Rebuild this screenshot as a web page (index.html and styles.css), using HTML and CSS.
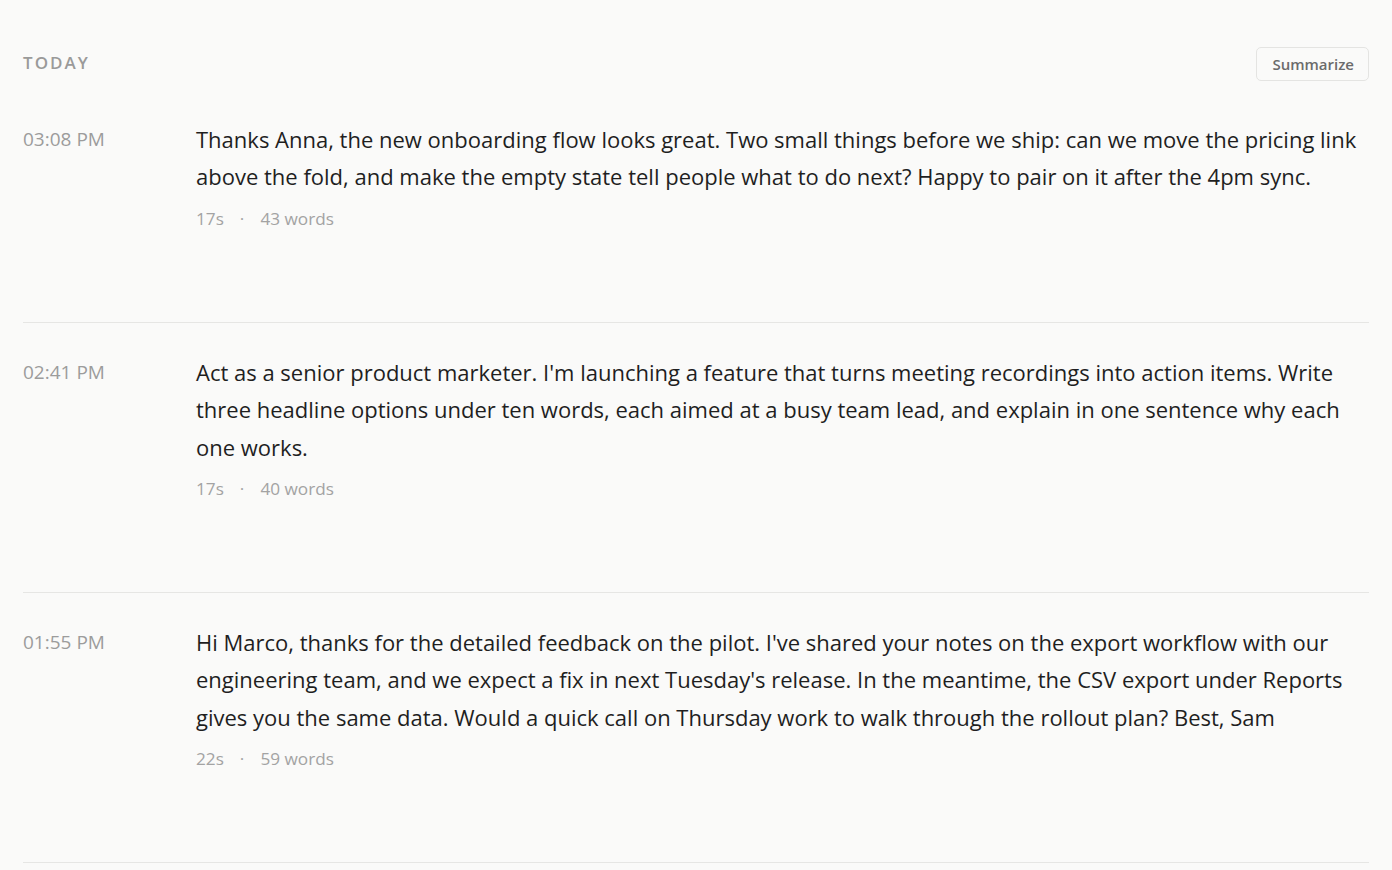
FILE: index.html
```html
<!DOCTYPE html>
<html lang="en">
<head>
<meta charset="utf-8">
<title>Today</title>
<link rel="stylesheet" href="styles.css">
</head>
<body>
<main class="page">
  <header class="day-header">
    <h2 class="day-label">Today</h2>
    <button class="summarize-btn" type="button">Summarize</button>
  </header>

  <article class="entry">
    <time class="entry-time">03:08 PM</time>
    <div class="entry-body">
      <p class="entry-text">Thanks Anna, the new onboarding flow looks great. Two small things before we ship: can we move the pricing link above the fold, and make the empty state tell people what to do next? Happy to pair on it after the 4pm sync.</p>
      <div class="entry-meta"><span>17s</span><span class="dot">·</span><span>43 words</span></div>
    </div>
  </article>

  <article class="entry">
    <time class="entry-time">02:41 PM</time>
    <div class="entry-body">
      <p class="entry-text">Act as a senior product marketer. I'm launching a feature that turns meeting recordings into action items. Write three headline options under ten words, each aimed at a busy team lead, and explain in one sentence why each one works.</p>
      <div class="entry-meta"><span>17s</span><span class="dot">·</span><span>40 words</span></div>
    </div>
  </article>

  <article class="entry">
    <time class="entry-time">01:55 PM</time>
    <div class="entry-body">
      <p class="entry-text">Hi Marco, thanks for the detailed feedback on the pilot. I've shared your notes on the export workflow with our engineering team, and we expect a fix in next Tuesday's release. In the meantime, the CSV export under Reports gives you the same data. Would a quick call on Thursday work to walk through the rollout plan? Best, Sam</p>
      <div class="entry-meta"><span>22s</span><span class="dot">·</span><span>59 words</span></div>
    </div>
  </article>
</main>
</body>
</html>
```
FILE: styles.css
```css
* { box-sizing: border-box; }

html, body {
  margin: 0;
  background: #fafaf9;
}

body {
  font-family: "Open Sans", "Noto Sans", sans-serif;
  color: #1f1f1f;
}

.page {
  padding: 47px 23px 0 23px;
}

.day-header {
  display: flex;
  align-items: center;
  justify-content: space-between;
  height: 34px;
  margin-bottom: 9px;
}

.day-label {
  margin: 0 0 3px 0;
  font-size: 17px;
  font-weight: 600;
  letter-spacing: 0.12em;
  text-transform: uppercase;
  color: #9a9a9a;
}

.summarize-btn {
  height: 34px;
  padding: 0 14px 0 15px;
  border: 1px solid #e4e4e2;
  border-radius: 5px;
  background: #fafaf9;
  font-family: inherit;
  font-size: 15px;
  font-weight: 600;
  color: #6b6b6b;
}

.entry {
  display: grid;
  grid-template-columns: 173px 1fr;
  padding: 31px 0 90px 0;
  border-bottom: 1px solid #e6e6e4;
}

.entry-time {
  font-size: 19px;
  line-height: 37.4px;
  color: #9c9c9c;
}

.entry-text {
  margin: 0;
  font-size: 22px;
  line-height: 37.4px;
  color: #1f1f1f;
}

.entry-meta {
  margin-top: 10px;
  font-size: 17.2px;
  line-height: 26px;
  color: #a3a3a3;
  display: flex;
}

.entry-meta .dot {
  margin: 0 16px;
}
```
